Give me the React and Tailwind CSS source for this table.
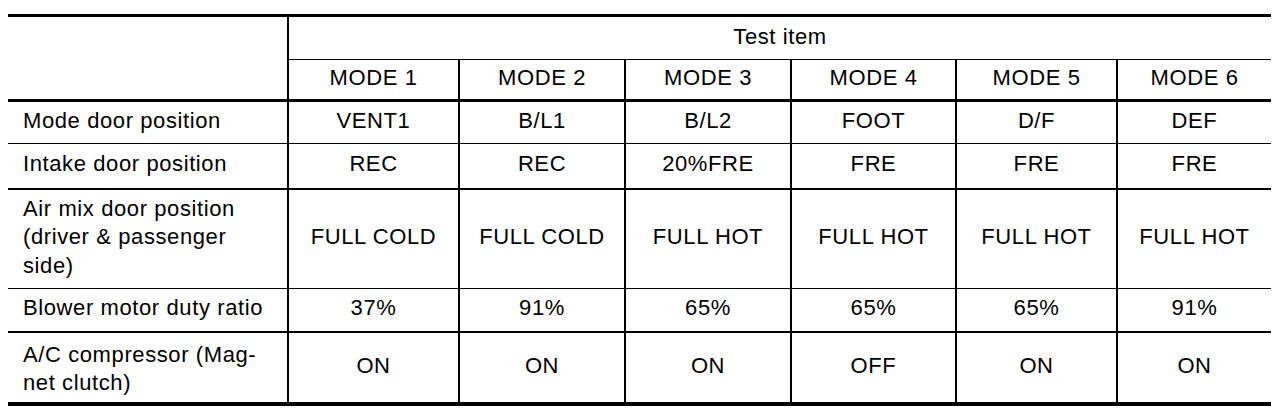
import React from "react";

const font = { fontFamily: '"Liberation Sans", Arial, Helvetica, sans-serif' };

const rows = [
  { label: ["Mode door position"], vals: ["VENT1", "B/L1", "B/L2", "FOOT", "D/F", "DEF"], b: "border-b", lp: "pb-[3px]" },
  { label: ["Intake door position"], vals: ["REC", "REC", "20%FRE", "FRE", "FRE", "FRE"], b: "border-b-2", lp: "pb-[3px]" },
  { label: ["Air mix door position", "(driver & passenger", "side)"], vals: ["FULL COLD", "FULL COLD", "FULL HOT", "FULL HOT", "FULL HOT", "FULL HOT"], b: "border-b", lp: "pb-[3px]" },
  { label: ["Blower motor duty ratio"], vals: ["37%", "91%", "65%", "65%", "65%", "91%"], b: "border-b-2", lp: "pb-[3px]" },
  { label: ["A/C compressor (Mag-", "net clutch)"], vals: ["ON", "ON", "ON", "OFF", "ON", "ON"], b: "border-b-0", lp: "pt-[3px]" },
];

export default function App() {
  return (
    <div className="w-[1280px] h-[416px] bg-white pt-[14px] pl-[8px]" style={font}>
      <div className="w-[1263px] border-t-[3px] border-b-4 border-black text-black text-[22px] leading-[28.5px] tracking-[0.6px] grid grid-cols-[281px_171px_166px_166px_165px_161px_153px] grid-rows-[43px_42px_42px_46px_99px_44px_69px]">
        <div className="row-span-2 border-r-2 border-b-[3px] border-black" />
        <div className="col-span-6 border-b border-black flex items-center justify-center pb-[1px]">Test item</div>
        {[1, 2, 3, 4, 5, 6].map((n) => (
          <div
            key={n}
            className={`border-b-[3px] border-black flex items-center justify-center pb-[3px] ${n < 6 ? "border-r-2" : ""}`}
          >
            MODE {n}
          </div>
        ))}
        {rows.map((r, i) => (
          <React.Fragment key={i}>
            <div className={`${r.b} ${r.lp} border-r-2 border-black flex items-center pl-[15px]`}>
              <div>
                {r.label.map((l, j) => (
                  <div key={j}>{l}</div>
                ))}
              </div>
            </div>
            {r.vals.map((v, j) => (
              <div
                key={j}
                className={`${r.b} border-black flex items-center justify-center pb-[3px] ${j < 5 ? "border-r-2" : ""}`}
              >
                {v}
              </div>
            ))}
          </React.Fragment>
        ))}
      </div>
    </div>
  );
}
